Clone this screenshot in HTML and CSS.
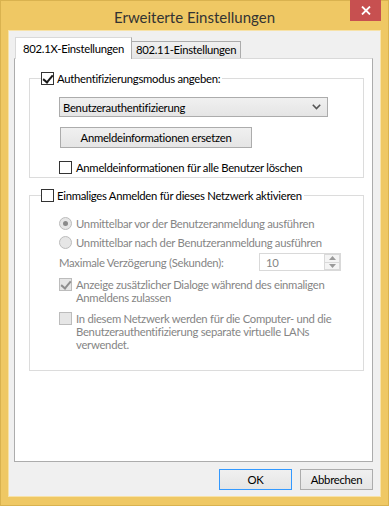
FILE: index.html
```html
<!DOCTYPE html>
<html lang="de">
<head>
<meta charset="utf-8">
<title>Erweiterte Einstellungen</title>
<link rel="stylesheet" href="styles.css">
</head>
<body>
<div class="window">
  <div class="titlebar">
    <div class="title">Erweiterte Einstellungen</div>
    <div class="close"><svg width="10" height="9" viewBox="0 0 10 9"><path d="M1 0.5 L9 8.5 M9 0.5 L1 8.5" stroke="#fff" stroke-width="1.8"/></svg></div>
  </div>
  <div class="client">
    <div class="tabs">
      <div class="tab active">802.1X-Einstellungen</div>
      <div class="tab">802.11-Einstellungen</div>
    </div>
    <div class="panel">
      <fieldset class="group g1">
        <legend class="legend"><span class="cb checked"></span><span>Authentifizierungsmodus angeben:</span></legend>
        <div class="gbody b1">
          <div class="select"><span>Benutzerauthentifizierung</span><svg width="9" height="6" viewBox="0 0 9 6"><path d="M0.8 0.8 L4.5 4.6 L8.2 0.8" fill="none" stroke="#555" stroke-width="1.6"/></svg></div>
          <div class="btn wide">Anmeldeinformationen ersetzen</div>
          <div class="row"><span class="cb"></span><span>Anmeldeinformationen für alle Benutzer löschen</span></div>
        </div>
      </fieldset>
      <fieldset class="group g2">
        <legend class="legend"><span class="cb"></span><span>Einmaliges Anmelden für dieses Netzwerk aktivieren</span></legend>
        <div class="gbody b2">
          <div class="row dis r1"><span class="rb on"></span><span>Unmittelbar vor der Benutzeranmeldung ausführen</span></div>
          <div class="row dis r2"><span class="rb"></span><span>Unmittelbar nach der Benutzeranmeldung ausführen</span></div>
          <div class="row dis delay"><span class="dlabel">Maximale Verzögerung (Sekunden):</span>
            <div class="spin"><span class="val">10</span><div class="arrows"><div class="arr"><svg width="7" height="4" viewBox="0 0 7 4"><path d="M0 4 L3.5 0 L7 4Z" fill="#9a9a9a"/></svg></div><div class="arr"><svg width="7" height="4" viewBox="0 0 7 4"><path d="M0 0 L3.5 4 L7 0Z" fill="#9a9a9a"/></svg></div></div></div>
          </div>
          <div class="row dis multi m1"><span class="cb dcb checked"></span><span>Anzeige zusätzlicher Dialoge während des einmaligen<br>Anmeldens zulassen</span></div>
          <div class="row dis multi m2"><span class="cb dcb"></span><span>In diesem Netzwerk werden für die Computer- und die<br>Benutzerauthentifizierung separate virtuelle LANs<br>verwendet.</span></div>
        </div>
      </fieldset>
    </div>
    <div class="footer">
      <div class="btn ok">OK</div>
      <div class="btn">Abbrechen</div>
    </div>
  </div>
</div>
</body>
</html>
```
FILE: styles.css
```css
* { box-sizing: border-box; }
html, body { margin: 0; padding: 0; }
body {
  background: #efc864;
  font-family: Lato, "Noto Sans", sans-serif;
  font-size: 11.3px;
  letter-spacing: -0.28px;
  color: #000;
}
.window {
  width: 389px;
  height: 506px;
  background: #efc864;
  border: 1px solid #d9b24f;
  display: flex;
  flex-direction: column;
  padding: 0 7px 8px 7px;
}
.titlebar {
  height: 29px;
  position: relative;
  display: flex;
  align-items: center;
  justify-content: center;
}
.title {
  font-size: 15px;
  letter-spacing: 0;
  color: #333;
  margin-top: 2px;
}
.close {
  position: absolute;
  right: 0;
  top: -1px;
  width: 31px;
  height: 21px;
  background: #c75050;
  display: flex;
  align-items: center;
  justify-content: center;
}
.client {
  flex: 1;
  background: #f0f0f0;
  border: 1px solid #f7e2a8;
  display: flex;
  flex-direction: column;
  padding: 6px 7px 6px 5px;
}
.tabs {
  display: flex;
  align-items: flex-end;
  height: 21px;
  padding-left: 1px;
  position: relative;
  z-index: 1;
}
.tab {
  height: 17px;
  padding: 0 4px;
  border: 1px solid #acacac;
  border-bottom: none;
  background: linear-gradient(#f0f0f0, #e5e5e5);
  line-height: 15px;
  white-space: nowrap;
}
.tab.active {
  background: #fff;
  border-color: #d9d9d9;
  border-right-color: #acacac;
  padding: 3px 7px 0 7px;
  margin-bottom: -1px;
  height: 22px;
}
.tab + .tab { border-left: none; }
.panel {
  flex: 1;
  background: #fff;
  border: 1px solid #acacac;
  border-top-color: #d9d9d9;
  padding: 12px 8px 0 14px;
  display: flex;
  flex-direction: column;
}
.group {
  margin: 0;
  padding: 0;
  border: 1px solid #dcdcdc;
  width: 335px;
  min-width: 0;
}
.legend {
  padding: 0 2px 0 0;
  margin-left: 11px;
  display: flex;
  align-items: center;
  height: 15px;
  white-space: nowrap;
}
.cb {
  display: inline-block;
  width: 13px;
  height: 13px;
  border: 1px solid #333;
  background: #fff;
  margin-right: 3px;
  flex: none;
  position: relative;
}
.cb.checked::after {
  content: "";
  position: absolute;
  left: 3px;
  top: 0px;
  width: 4px;
  height: 8px;
  border: solid #1a1a1a;
  border-width: 0 2px 2px 0;
  transform: rotate(40deg);
}
.dcb { border-color: #bcbcbc; background: #e6e6e6; }
.dcb.checked::after { border-color: #8f8f8f; }
.gbody { padding-left: 29px; }
.b1 { height: 91px; padding-top: 11px; }
.select {
  width: 269px;
  height: 20px;
  border: 1px solid #acacac;
  background: linear-gradient(#f0f0f0, #e5e5e5);
  display: flex;
  align-items: center;
  justify-content: space-between;
  padding: 0 6px 0 3px;
}
.btn {
  height: 21px;
  border: 1px solid #acacac;
  background: linear-gradient(#f0f0f0, #e5e5e5);
  display: flex;
  align-items: center;
  justify-content: center;
  width: 73px;
}
.btn.wide { width: 192px; margin: 10px 0 0 1px; }
.row { display: flex; align-items: center; white-space: nowrap; }
.b1 .row { margin-top: 13px; }
.row .cb { margin-right: 4px; }
.g2 { margin-top: 10px; }
.b2 { height: 167px; padding-top: 12px; }
.dis { color: #858585; }
.rb {
  display: inline-block;
  width: 13px;
  height: 13px;
  border-radius: 50%;
  border: 1px solid #bcbcbc;
  background: #e6e6e6;
  margin-right: 4px;
  flex: none;
  position: relative;
}
.rb.on::after {
  content: "";
  position: absolute;
  left: 3px; top: 3px;
  width: 5px; height: 5px;
  border-radius: 50%;
  background: #8a8a8a;
}
.r1, .r2 { height: 16px; }
.r2 { margin-top: 3px; }
.delay { margin-top: 2px; height: 20px; justify-content: space-between; width: 282px; }
.spin {
  width: 82px;
  height: 18px;
  border: 1px solid #d9d9d9;
  display: flex;
  justify-content: space-between;
  align-items: stretch;
}
.val { padding: 2px 0 0 6px; }
.arrows { width: 16px; display: flex; flex-direction: column; }
.arr {
  flex: 1;
  border: 1px solid #d9d9d9;
  background: #f4f4f4;
  display: flex; align-items: center; justify-content: center;
}
.arr + .arr { border-top: none; }
.multi { align-items: flex-start; line-height: 13px; }
.m1 { margin-top: 6px; }
.m2 { margin-top: 8px; }
.footer {
  display: flex;
  justify-content: flex-end;
  gap: 8px;
  padding-top: 7px;
}
.btn.ok { border-color: #3399ff; }
```
